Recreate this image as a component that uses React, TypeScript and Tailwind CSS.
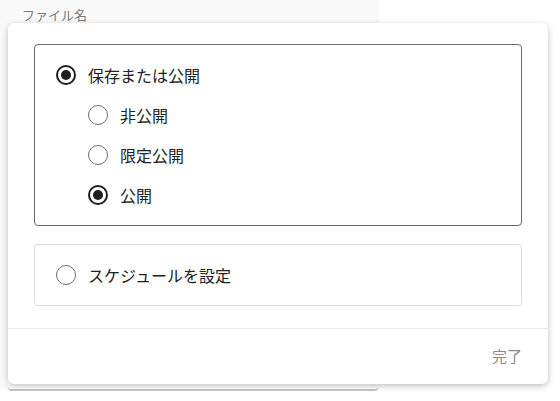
const FONT = { fontFamily: '"Noto Sans CJK JP", "Noto Sans", sans-serif' };

function Radio({ checked }: { checked?: boolean }) {
  return checked ? (
    <span className="flex h-5 w-5 shrink-0 items-center justify-center rounded-full border-2 border-[#1f1f1f]">
      <span className="h-[10px] w-[10px] rounded-full bg-[#1f1f1f]" />
    </span>
  ) : (
    <span className="h-5 w-5 shrink-0 rounded-full border-[1.5px] border-[#6f6f6f]" />
  );
}

function Option({ label, checked, sub }: { label: string; checked?: boolean; sub?: boolean }) {
  return (
    <div className={`flex h-10 items-center gap-3 ${sub ? "pl-[53px]" : "pl-[21px]"}`}>
      <Radio checked={checked} />
      <span className="text-[16px] text-[#222]">{label}</span>
    </div>
  );
}

export default function App() {
  return (
    <div className="relative h-[401px] w-[560px] overflow-hidden bg-white" style={FONT}>
      {/* page behind the popover */}
      <div className="h-[389px] w-[379px] bg-[#f9f9f9]">
        <div className="px-[22px] pt-[5px] text-[13px] text-[#7a7a7a]">ファイル名</div>
        <div className="ml-2 mt-[2px] h-[364px] w-[370px] rounded-b border-b-2 border-[#c4c4c4] bg-white" />
      </div>

      {/* visibility popover */}
      <div className="absolute left-2 top-[23px] w-[540px] rounded-md bg-white shadow-[0_2px_6px_rgba(0,0,0,0.25)]">
        <div className="px-[26px] pb-[22px] pt-[21px]">
          <div className="rounded-[4px] border border-[#6a6a6a] py-[10px]">
            <Option label="保存または公開" checked />
            <Option label="非公開" sub />
            <Option label="限定公開" sub />
            <Option label="公開" checked sub />
          </div>
          <div className="mt-[18px] rounded-[4px] border border-[#dcdcdc] py-[10px]">
            <Option label="スケジュールを設定" />
          </div>
        </div>
        <div className="flex h-14 items-center justify-end border-t border-[#e8e8e8] px-[26px]">
          <span className="text-[15px] text-[#8a8a8a]">完了</span>
        </div>
      </div>
    </div>
  );
}
